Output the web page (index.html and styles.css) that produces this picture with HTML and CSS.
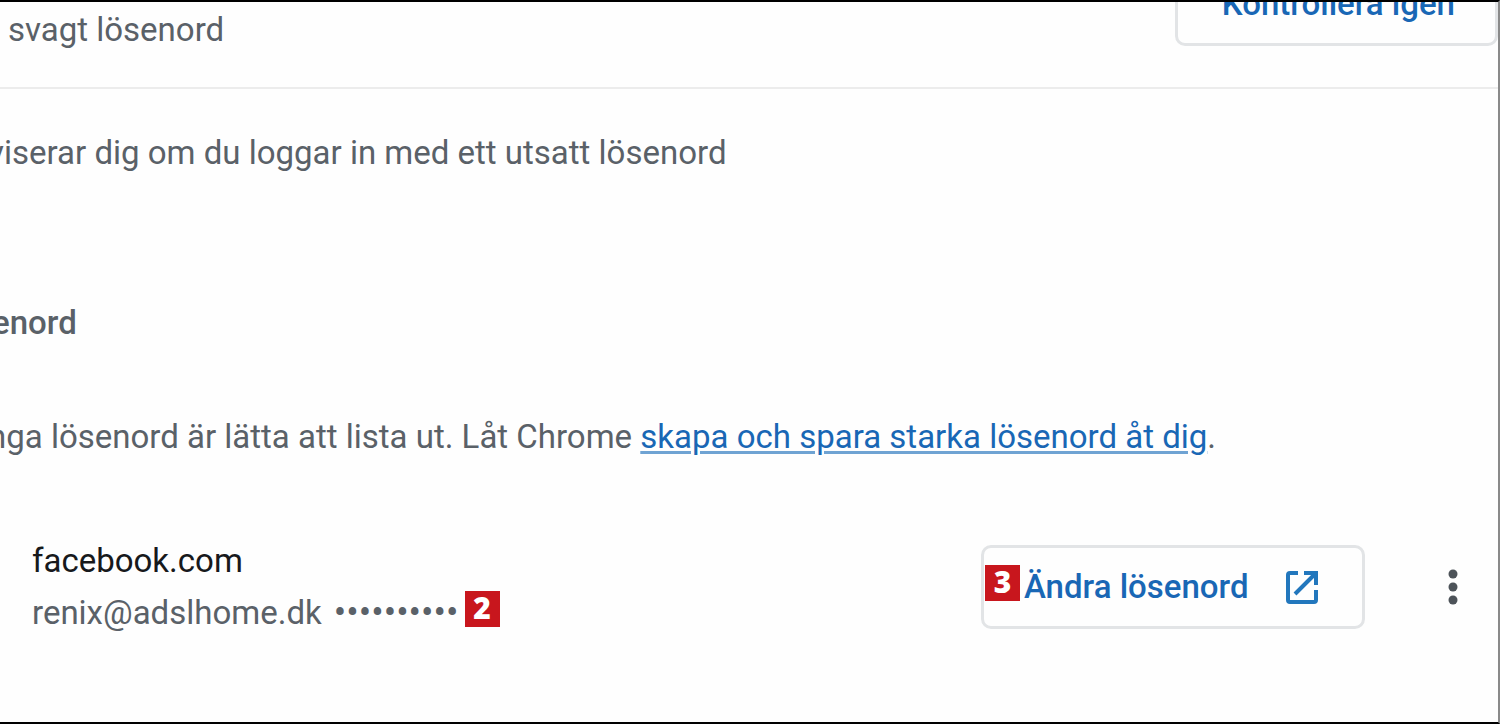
FILE: index.html
```html
<!DOCTYPE html>
<html lang="sv">

<head>
	<meta charset="UTF-8">
	<meta name="viewport" content="width=device-width, initial-scale=1">
	<title>Kontrollera lösenord</title>
	<link rel="stylesheet" href="styles.css">
</head>

<body>
	<main class="panel">
		<header class="check-header">
			<p class="status">svagt lösenord</p>
			<button type="button" class="outline-button check-button">Kontrollera igen</button>
		</header>

		<p class="notice">viserar dig om du loggar in med ett utsatt lösenord</p>

		<h2 class="section-title">enord</h2>
		<p class="description">nga lösenord är lätta att lista ut. Låt Chrome <a href="#" class="link">skapa och spara starka lösenord åt dig</a>.</p>

		<div class="entry">
			<div class="account">
				<p class="site">facebook.com</p>
				<div class="login">
					<span>renix@adslhome.dk</span>
					<span class="dots">••••••••••</span>
					<span class="step">2</span>
				</div>
			</div>
			<button type="button" class="outline-button change-button">
				<span class="step">3</span>
				<span>Ändra lösenord</span>
				<svg class="open-icon" viewBox="0 0 36 36" aria-hidden="true">
					<path d="M14 4H6Q4 4 4 6V31Q4 33 6 33H30Q32 33 32 31V21M20 4H32V16M32 4L11 25" />
				</svg>
			</button>
			<button type="button" class="more-button" aria-label="Fler åtgärder">
				<svg class="more-icon" viewBox="0 0 10 36" aria-hidden="true">
					<circle cx="5" cy="5" r="4.5" />
					<circle cx="5" cy="18" r="4.5" />
					<circle cx="5" cy="31" r="4.5" />
				</svg>
			</button>
		</div>
	</main>
</body>

</html>
```
FILE: styles.css
```css
* {
	box-sizing: border-box;
}

body {
	margin: 0;
	background-color: #fefefe;
	color: #5a6168;
	font-family: Roboto, Arial, sans-serif;
	font-size: 33px;
	line-height: 40px;
}

p, h2 {
	margin: 0;
}

.panel {
	min-height: 100vh;
	border-top: 2px solid black;
	border-right: 2px solid #8a8a8a;
	border-bottom: 2px solid black;
	overflow: hidden;
	white-space: nowrap;
}

.check-header {
	display: flex;
	justify-content: space-between;
	height: 87px;
	padding-left: 8px;
	border-bottom: 2px solid #ececec;
	overflow: hidden;
}

.status {
	margin-top: 8px;
}

.outline-button {
	height: 84px;
	border: 3px solid #e2e4e6;
	border-radius: 10px;
	background-color: transparent;
	color: #1967b5;
	font-family: inherit;
	font-size: 33px;
	font-weight: 500;
	line-height: 40px;
	cursor: pointer;
}

.check-button {
	margin-top: -40px;
	padding: 0 40px 0 44px;
}

.notice {
	margin: 44px 0 0 -12px;
}

.section-title {
	margin: 130px 0 0 -8px;
	font-size: 33px;
	font-weight: 500;
}

.description {
	margin: 74px 0 0 -12px;
}

.link {
	color: #1967b5;
	text-decoration-thickness: 3px;
	text-decoration-color: #6fa3d3;
	text-underline-offset: 3px;
}

.entry {
	display: flex;
	align-items: center;
	margin-top: 84px;
	padding: 0 34px 0 32px;
}

.account {
	flex: 1;
}

.site {
	color: #17191c;
	margin-bottom: 12px;
}

.login {
	display: flex;
	align-items: center;
}

.dots {
	margin: 0 6px 0 12px;
	font-size: 37px;
}

.step {
	width: 35px;
	height: 36px;
	margin-top: -8px;
	background-color: #c8161d;
	color: white;
	font-family: "Open Sans", sans-serif;
	font-size: 30px;
	font-weight: 800;
	line-height: 34px;
	text-align: center;
}

.change-button {
	display: flex;
	align-items: center;
	width: 384px;
	padding: 0 42px 0 1px;
}

.change-button .step {
	margin-right: 4px;
}

.open-icon {
	width: 36px;
	height: 36px;
	margin-left: auto;
	fill: none;
	stroke: #2277bd;
	stroke-width: 4;
}

.more-button {
	margin-left: 77px;
	padding: 0 6px;
	border: none;
	background-color: transparent;
	cursor: pointer;
}

.more-icon {
	display: block;
	width: 10px;
	height: 36px;
	fill: #4d5359;
}
```
